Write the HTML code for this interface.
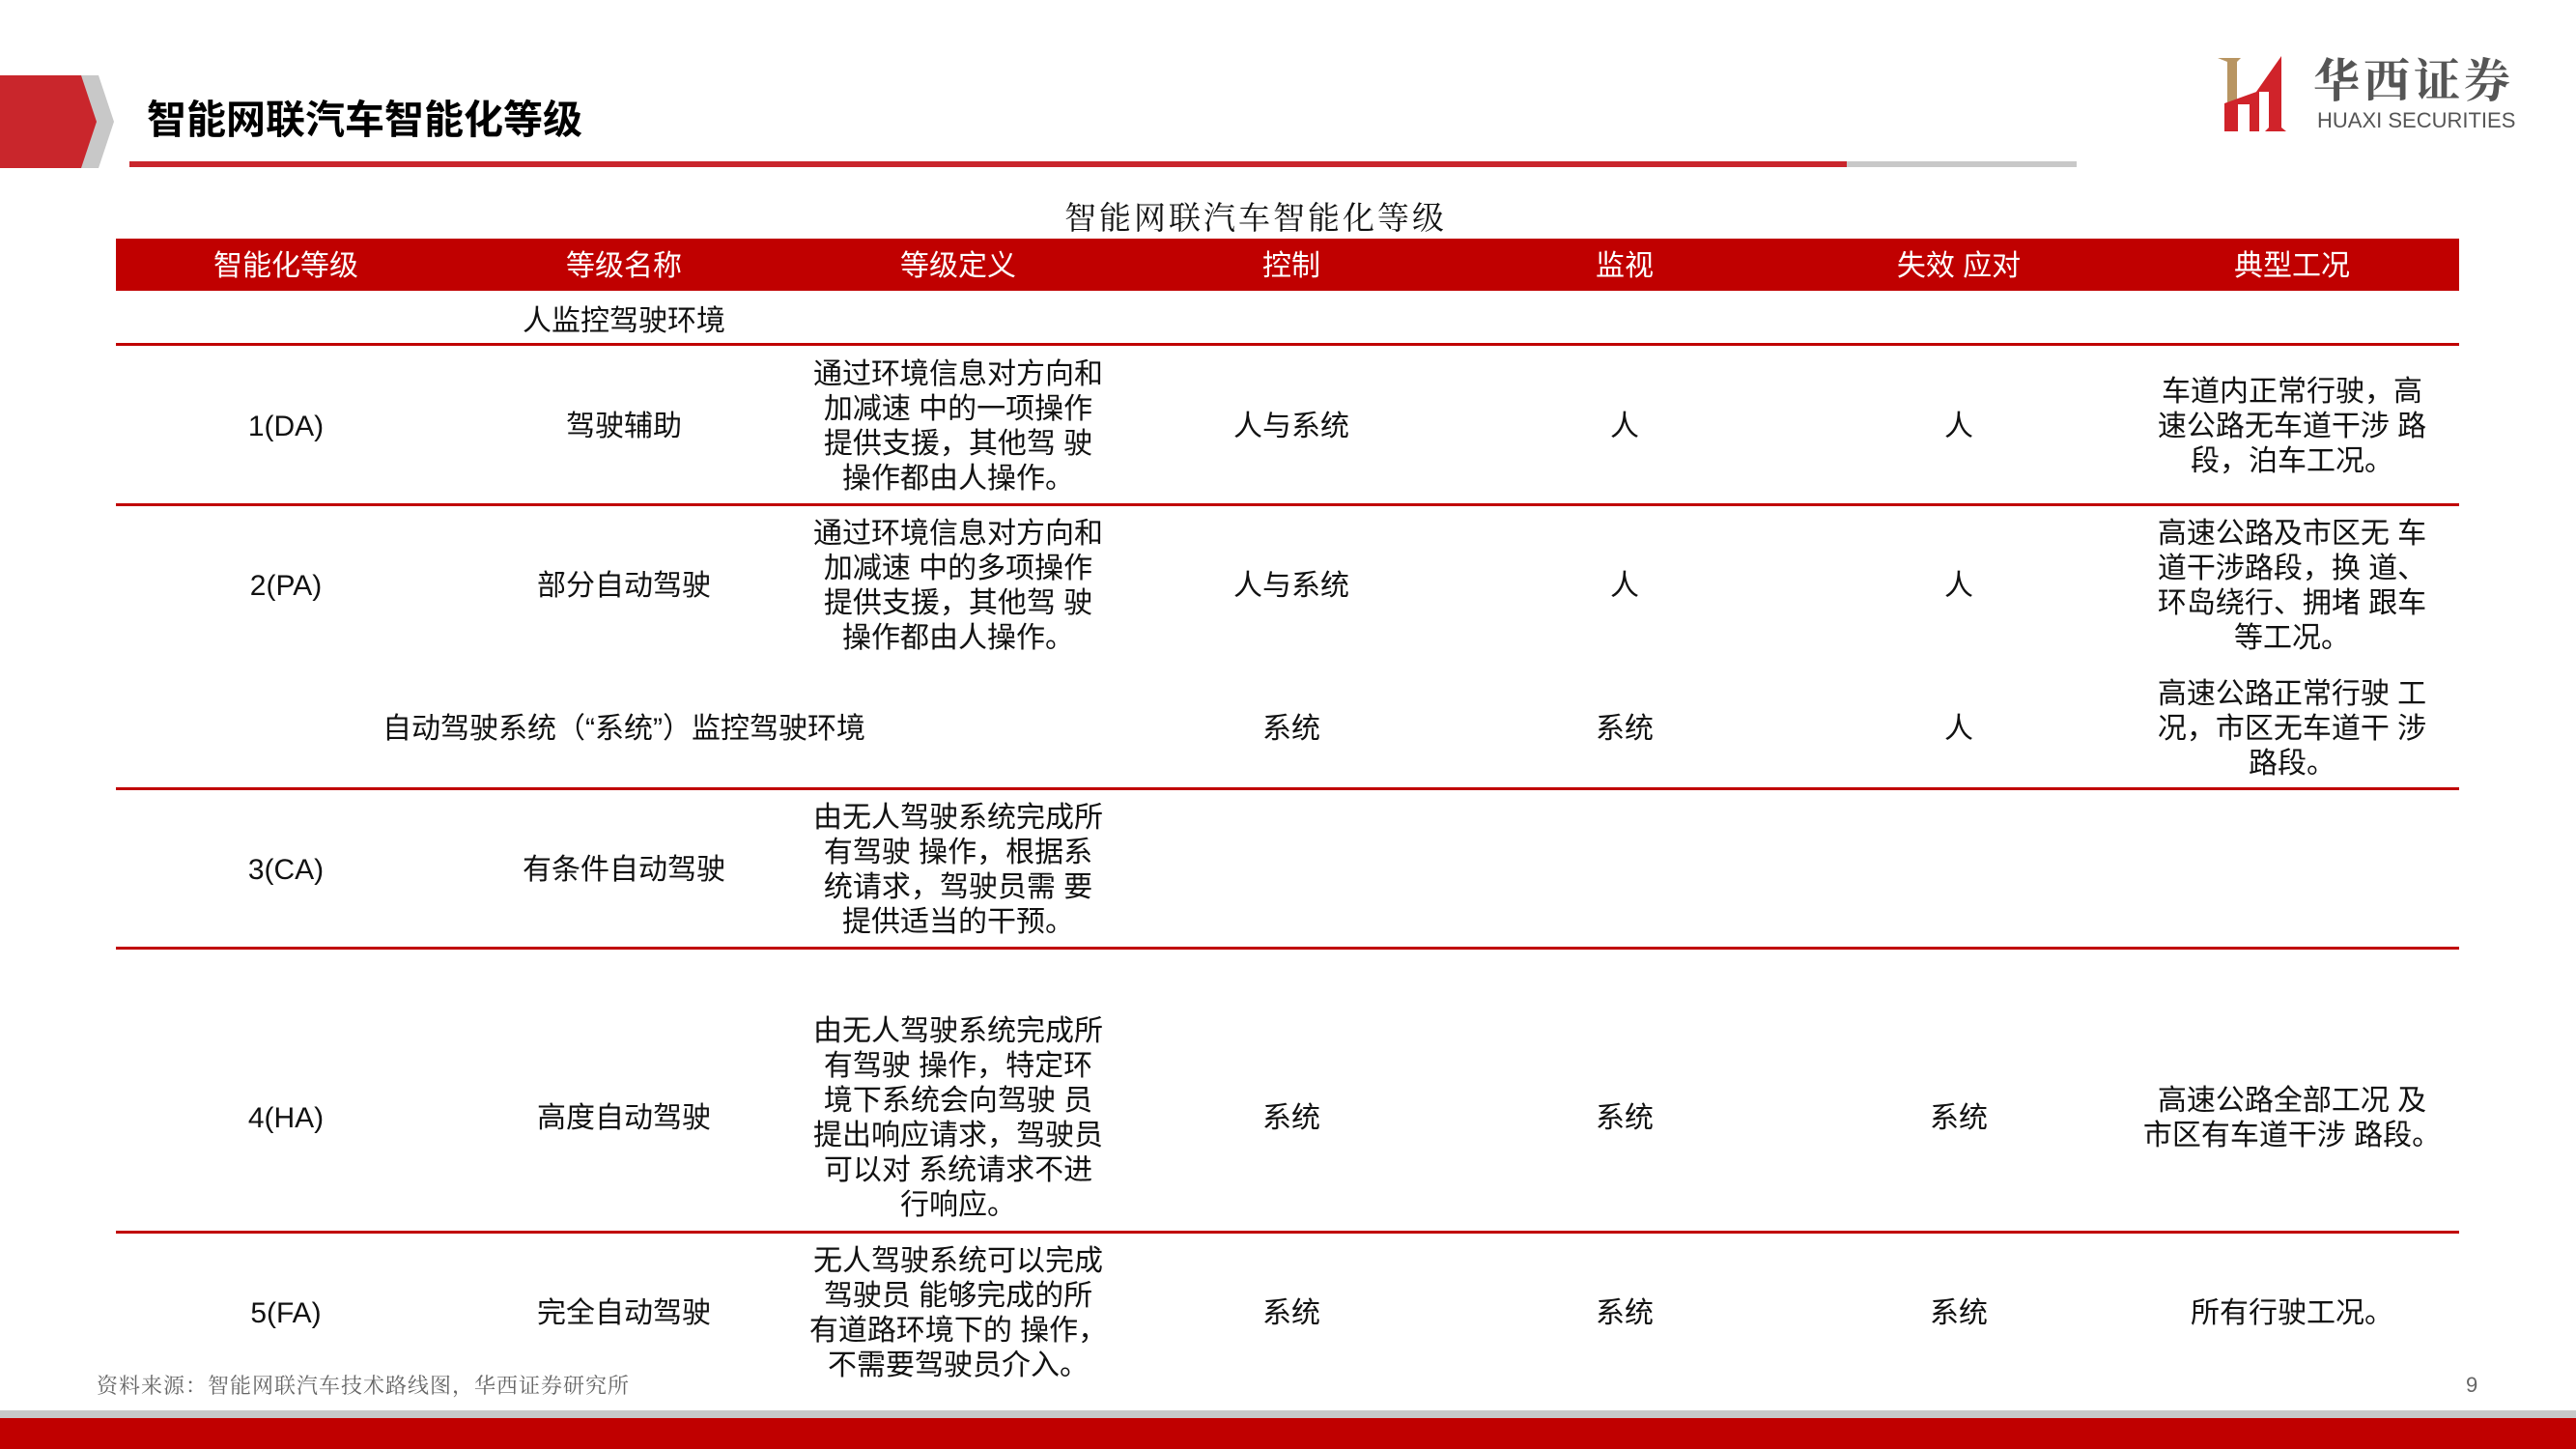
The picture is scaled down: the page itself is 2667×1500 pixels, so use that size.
<!DOCTYPE html>
<html><head><meta charset="utf-8"><style>
body{margin:0;width:2667px;height:1500px;position:relative;background:#fff;overflow:hidden;font-family:"Liberation Sans","Noto Sans CJK SC",sans-serif;color:#111}
.a{position:absolute}
.t{position:absolute;width:340px;margin-left:-170px;text-align:center;font-size:30px;line-height:36px;transform:translateY(-50%);margin-top:3px}
.h{position:absolute;width:340px;margin-left:-170px;text-align:center;font-size:30px;color:#fff;top:258px;line-height:36px}
.ln{position:absolute;left:120px;width:2426px;height:3px;background:#c00000}
</style></head><body>
<svg class="a" style="left:0;top:78px" width="120" height="96"><polygon points="80,0 102,0 118,48 102,96 80,96 96,48" fill="#c8c8c8"/><polygon points="0,0 84,0 100,48 84,96 0,96" fill="#c9262c"/></svg>
<div class="a" style="left:152px;top:98px;font-size:41px;font-weight:bold;line-height:52px;color:#000">智能网联汽车智能化等级</div>
<div class="a" style="left:134px;top:167px;width:1778px;height:6px;background:#c9262c"></div>
<div class="a" style="left:1912px;top:167px;width:238px;height:6px;background:#c8c8c8"></div>
<svg class="a" style="left:2295px;top:58px" width="78" height="80"><polygon points="1,2 25,2 21,6 21,45 11,48 11,6" fill="#b89562"/><polygon points="8,49 44,36 44,78 34,78 34,50 22,50 22,78 8,78" fill="#d0232a"/><polygon points="41,37 67,0 67,74 72,78 50,78 54,74 54,37" fill="#d0232a"/></svg>
<div class="a" style="left:2395px;top:52px;font-size:48px;font-family:'Noto Serif CJK SC',serif;font-weight:bold;color:#555;letter-spacing:4px;line-height:56px">华西证券</div>
<div class="a" style="left:2399px;top:112px;font-size:22px;color:#555;line-height:26px">HUAXI SECURITIES</div>
<div class="a" style="left:0;width:2600px;text-align:center;top:202px;font-size:33px;font-family:'Noto Serif CJK SC',serif;letter-spacing:3px;line-height:44px">智能网联汽车智能化等级</div>
<div class="a" style="left:120px;top:247px;width:2426px;height:54px;background:#c00000"></div>
<div class="h" style="left:296px">智能化等级</div><div class="h" style="left:646px">等级名称</div><div class="h" style="left:992px">等级定义</div><div class="h" style="left:1337px">控制</div><div class="h" style="left:1682px">监视</div><div class="h" style="left:2028px">失效 应对</div><div class="h" style="left:2373px">典型工况</div>
<div class="ln" style="top:355px"></div><div class="ln" style="top:521px"></div><div class="ln" style="top:815px"></div><div class="ln" style="top:980px"></div><div class="ln" style="top:1274px"></div>
<div class="t" style="left:646px;top:330px">人监控驾驶环境</div>
<div class="t" style="left:296px;top:439px">1(DA)</div><div class="t" style="left:646px;top:439px">驾驶辅助</div><div class="t" style="left:992px;top:439px">通过环境信息对方向和<br>加减速 中的一项操作<br>提供支援，其他驾 驶<br>操作都由人操作。</div><div class="t" style="left:1337px;top:439px">人与系统</div><div class="t" style="left:1682px;top:439px">人</div><div class="t" style="left:2028px;top:439px">人</div><div class="t" style="left:2373px;top:439px">车道内正常行驶，高<br>速公路无车道干涉 路<br>段，泊车工况。</div>
<div class="t" style="left:296px;top:604px">2(PA)</div><div class="t" style="left:646px;top:604px">部分自动驾驶</div><div class="t" style="left:992px;top:604px">通过环境信息对方向和<br>加减速 中的多项操作<br>提供支援，其他驾 驶<br>操作都由人操作。</div><div class="t" style="left:1337px;top:604px">人与系统</div><div class="t" style="left:1682px;top:604px">人</div><div class="t" style="left:2028px;top:604px">人</div><div class="t" style="left:2373px;top:604px">高速公路及市区无 车<br>道干涉路段，换 道、<br>环岛绕行、拥堵 跟车<br>等工况。</div>
<div class="t" style="left:646px;width:800px;margin-left:-400px;top:752px">自动驾驶系统（“系统”）监控驾驶环境</div><div class="t" style="left:1337px;top:752px">系统</div><div class="t" style="left:1682px;top:752px">系统</div><div class="t" style="left:2028px;top:752px">人</div><div class="t" style="left:2373px;top:752px">高速公路正常行驶 工<br>况，市区无车道干 涉<br>路段。</div>
<div class="t" style="left:296px;top:898px">3(CA)</div><div class="t" style="left:646px;top:898px">有条件自动驾驶</div><div class="t" style="left:992px;top:898px">由无人驾驶系统完成所<br>有驾驶 操作，根据系<br>统请求，驾驶员需 要<br>提供适当的干预。</div>
<div class="t" style="left:296px;top:1155px">4(HA)</div><div class="t" style="left:646px;top:1155px">高度自动驾驶</div><div class="t" style="left:992px;top:1155px">由无人驾驶系统完成所<br>有驾驶 操作，特定环<br>境下系统会向驾驶 员<br>提出响应请求，驾驶员<br>可以对 系统请求不进<br>行响应。</div><div class="t" style="left:1337px;top:1155px">系统</div><div class="t" style="left:1682px;top:1155px">系统</div><div class="t" style="left:2028px;top:1155px">系统</div><div class="t" style="left:2373px;top:1155px">高速公路全部工况 及<br>市区有车道干涉 路段。</div>
<div class="t" style="left:296px;top:1357px">5(FA)</div><div class="t" style="left:646px;top:1357px">完全自动驾驶</div><div class="t" style="left:992px;top:1357px">无人驾驶系统可以完成<br>驾驶员 能够完成的所<br>有道路环境下的 操作，<br>不需要驾驶员介入。</div><div class="t" style="left:1337px;top:1357px">系统</div><div class="t" style="left:1682px;top:1357px">系统</div><div class="t" style="left:2028px;top:1357px">系统</div><div class="t" style="left:2373px;top:1357px">所有行驶工况。</div>
<div class="a" style="left:100px;top:1420px;font-size:22px;font-family:'Noto Serif CJK SC',serif;color:#666;line-height:28px;letter-spacing:1px">资料来源：智能网联汽车技术路线图，华西证券研究所</div>
<div class="a" style="left:2553px;top:1420px;font-size:22px;color:#666;line-height:28px">9</div>
<div class="a" style="left:0;top:1460px;width:2667px;height:8px;background:#c8c8c8"></div>
<div class="a" style="left:0;top:1468px;width:2667px;height:32px;background:#c00000"></div>
</body></html>
